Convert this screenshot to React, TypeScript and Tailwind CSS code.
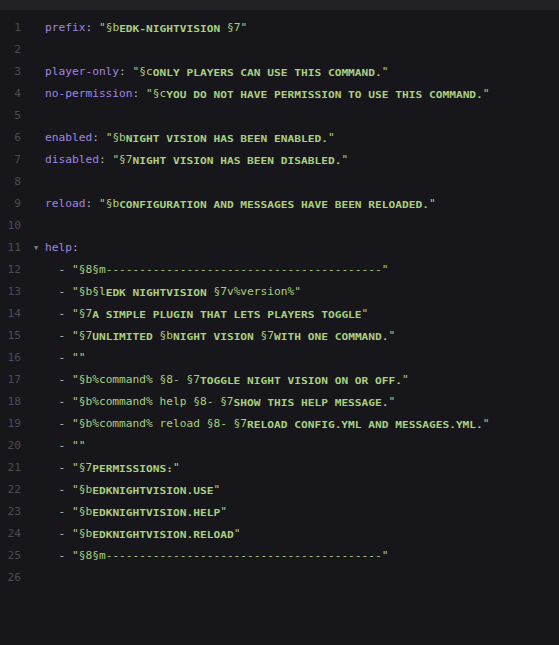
import React from "react";

// syntax pieces
const K = ({ children }: { children: React.ReactNode }) => (
  <span className="text-[#a085e0]">{children}</span>
);
const P = ({ children }: { children: React.ReactNode }) => (
  <span className="text-[#b9b9c2]">{children}</span>
);
const G = ({ children }: { children: React.ReactNode }) => (
  <span className="text-[#a9cf80]">{children}</span>
);
// small caps look of the colour-coded text
const C = ({ children }: { children: React.ReactNode }) => (
  <span className="inline-block origin-[50%_78%] scale-y-[0.76] font-bold uppercase text-[#a9cf80]">
    {children}
  </span>
);

const Item = ({ children }: { children?: React.ReactNode }) => (
  <>
    <P>{"  - "}</P>
    {children}
  </>
);

const dashes = "-".repeat(41);

const lines: React.ReactNode[] = [
  <>
    <K>prefix</K>
    <P>: </P>
    <G>"§b</G>
    <C>EDK-NightVision </C>
    <G>§7"</G>
  </>,
  null,
  <>
    <K>player-only</K>
    <P>: </P>
    <G>"§c</G>
    <C>Only players can use this command.</C>
    <G>"</G>
  </>,
  <>
    <K>no-permission</K>
    <P>: </P>
    <G>"§c</G>
    <C>You do not have permission to use this command.</C>
    <G>"</G>
  </>,
  null,
  <>
    <K>enabled</K>
    <P>: </P>
    <G>"§b</G>
    <C>Night vision has been enabled.</C>
    <G>"</G>
  </>,
  <>
    <K>disabled</K>
    <P>: </P>
    <G>"§7</G>
    <C>Night vision has been disabled.</C>
    <G>"</G>
  </>,
  null,
  <>
    <K>reload</K>
    <P>: </P>
    <G>"§b</G>
    <C>Configuration and messages have been reloaded.</C>
    <G>"</G>
  </>,
  null,
  <>
    <K>help</K>
    <P>:</P>
  </>,
  <Item>
    <G>"§8§m{dashes}"</G>
  </Item>,
  <Item>
    <G>"§b§l</G>
    <C>EDK NightVision </C>
    <G>§7v%version%"</G>
  </Item>,
  <Item>
    <G>"§7</G>
    <C>A simple plugin that lets players toggle</C>
    <G>"</G>
  </Item>,
  <Item>
    <G>"§7</G>
    <C>Unlimited </C>
    <G>§b</G>
    <C>Night vision </C>
    <G>§7</G>
    <C>with one command.</C>
    <G>"</G>
  </Item>,
  <Item>
    <G>""</G>
  </Item>,
  <Item>
    <G>"§b%command% §8- §7</G>
    <C>Toggle night vision on or off.</C>
    <G>"</G>
  </Item>,
  <Item>
    <G>"§b%command% help §8- §7</G>
    <C>Show this help message.</C>
    <G>"</G>
  </Item>,
  <Item>
    <G>"§b%command% reload §8- §7</G>
    <C>Reload config.yml and messages.yml.</C>
    <G>"</G>
  </Item>,
  <Item>
    <G>""</G>
  </Item>,
  <Item>
    <G>"§7</G>
    <C>Permissions:</C>
    <G>"</G>
  </Item>,
  <Item>
    <G>"§b</G>
    <C>edknightvision.use</C>
    <G>"</G>
  </Item>,
  <Item>
    <G>"§b</G>
    <C>edknightvision.help</C>
    <G>"</G>
  </Item>,
  <Item>
    <G>"§b</G>
    <C>edknightvision.reload</C>
    <G>"</G>
  </Item>,
  <Item>
    <G>"§8§m{dashes}"</G>
  </Item>,
  null,
];

export default function App() {
  return (
    <div className="min-h-[645px] w-[559px] bg-[#17171b] font-['DejaVu_Sans_Mono',monospace] text-[11.2px]">
      <div className="h-[10px] bg-[#212126]" />
      <div className="pt-[7px]">
        {lines.map((line, i) => (
          <div key={i} className="flex h-[22px] items-center whitespace-pre">
            <div className="w-[21px] text-right text-[#4b4b53]">{i + 1}</div>
            <div className="flex w-[24px] justify-center pl-[6px] text-[7px] text-[#7c7c84]">
              {i === 10 ? "▼" : ""}
            </div>
            <div>{line}</div>
          </div>
        ))}
      </div>
    </div>
  );
}
